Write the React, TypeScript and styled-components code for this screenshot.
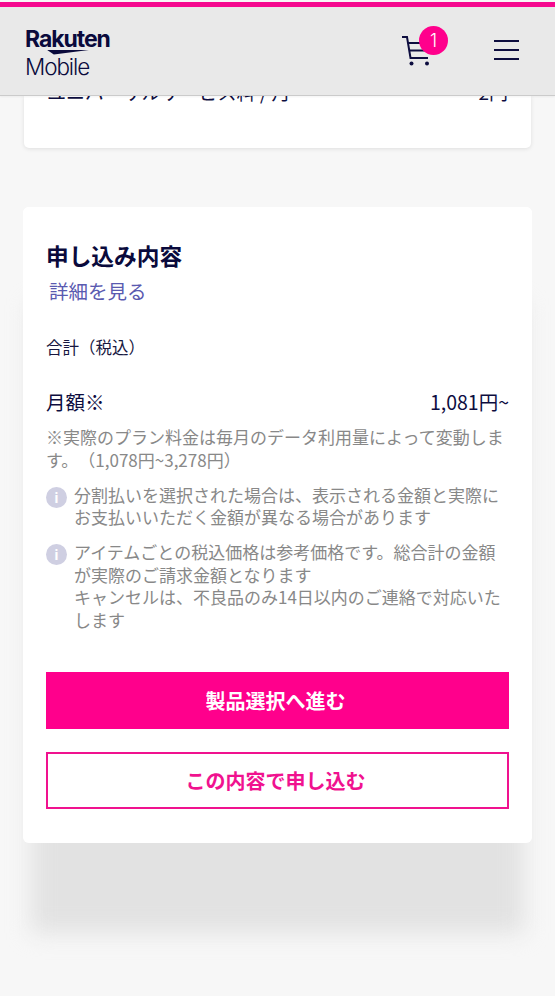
import React from "react";
import styled, { createGlobalStyle } from "styled-components";

const GlobalStyle = createGlobalStyle`
  html, body {
    margin: 0;
    padding: 0;
    background: #f7f7f7;
  }
  body {
    font-family: "Noto Sans CJK JP", "Noto Sans", sans-serif;
    text-spacing-trim: space-all;
  }
`;

const App: React.FC = () => {
  return (
    <Page>
      <GlobalStyle />
      <Header>
        <Logo>
          <LogoTop>Rakuten</LogoTop>
          <LogoSwoosh viewBox="0 0 50 6" aria-hidden="true">
            <path d="M0 0 L50 0 L8 5.5 Z" fill="#0a0a3c" />
          </LogoSwoosh>
          <LogoBottom>Mobile</LogoBottom>
        </Logo>
        <HeaderIcons>
          <CartWrap>
            <svg width="30" height="32" viewBox="0 0 30 32" fill="none" stroke="#0d0d3f" strokeWidth="2">
              <path d="M1 2 H6 L9.5 23 H27" />
              <path d="M7 8 H28" />
              <path d="M8.5 15.5 H26" />
              <circle cx="10.5" cy="28.5" r="2" fill="#0d0d3f" stroke="none" />
              <circle cx="26" cy="28.5" r="2" fill="#0d0d3f" stroke="none" />
            </svg>
            <Badge>1</Badge>
          </CartWrap>
          <Burger aria-label="menu">
            <BurgerLine />
            <BurgerLine />
            <BurgerLine />
          </Burger>
        </HeaderIcons>
      </Header>

      <Main>
        <PrevCard>
          <PrevRow>
            <span>ユニバーサルサービス料 / 月</span>
            <span>2円</span>
          </PrevRow>
        </PrevCard>

        <SummaryCard>
          <Title>申し込み内容</Title>
          <DetailLink>詳細を見る</DetailLink>
          <TotalLabel>合計（税込）</TotalLabel>
          <PriceRow>
            <span>月額※</span>
            <span>1,081円~</span>
          </PriceRow>
          <Note>※実際のプラン料金は毎月のデータ利用量によって変動します。（1,078円~3,278円）</Note>
          <InfoRow>
            <InfoIcon>i</InfoIcon>
            <Note>分割払いを選択された場合は、表示される金額と実際にお支払いいただく金額が異なる場合があります</Note>
          </InfoRow>
          <InfoRow>
            <InfoIcon>i</InfoIcon>
            <Note>
              アイテムごとの税込価格は参考価格です。総合計の金額が実際のご請求金額となります
              <br />
              キャンセルは、不良品のみ14日以内のご連絡で対応いたします
            </Note>
          </InfoRow>
          <Buttons>
            <PrimaryButton>製品選択へ進む</PrimaryButton>
            <OutlineButton>この内容で申し込む</OutlineButton>
          </Buttons>
        </SummaryCard>
      </Main>
    </Page>
  );
};

const Page = styled.div`
  width: 555px;
  height: 996px;
  overflow: hidden;
  background: #f7f7f7;
`;

const Header = styled.header`
  position: relative;
  z-index: 2;
  box-sizing: border-box;
  height: 94px;
  margin-top: 2px;
  padding: 0 36px 2px 25px;
  display: flex;
  align-items: center;
  justify-content: space-between;
  background: #e9e9e9;
  border-top: 5px solid #f5098f;
  border-bottom: 1px solid #cbcbcb;
  box-shadow: 0 1px 2px rgba(0, 0, 0, 0.05);
`;

const Logo = styled.div`
  display: flex;
  flex-direction: column;
  color: #0a0a3c;
  margin-top: 6px;
`;

const LogoTop = styled.div`
  font-family: "Inter", sans-serif;
  font-size: 23px;
  font-weight: 700;
  line-height: 22px;
  letter-spacing: -1.05px;
`;

const LogoSwoosh = styled.svg`
  width: 50px;
  height: 5px;
  margin: 0 0 0 18px;
`;

const LogoBottom = styled.div`
  font-family: "Inter", sans-serif;
  font-size: 22.5px;
  font-weight: 300;
  line-height: 23px;
  letter-spacing: -1.1px;
`;

const HeaderIcons = styled.div`
  display: flex;
  align-items: center;
  gap: 46px;
`;

const CartWrap = styled.div`
  position: relative;
  width: 47px;
  height: 32px;
  margin-top: 1px;
`;

const Badge = styled.div`
  position: absolute;
  left: 18px;
  top: -9px;
  width: 29px;
  height: 29px;
  border-radius: 50%;
  background: #ff008c;
  color: #fff;
  font-family: "Inter", sans-serif;
  font-size: 18px;
  font-weight: 300;
  line-height: 29px;
  text-align: center;
`;

const Burger = styled.div`
  width: 25px;
  display: flex;
  flex-direction: column;
  gap: 7px;
`;

const BurgerLine = styled.div`
  height: 2px;
  background: #0d0d3f;
`;

const Main = styled.main`
  padding: 0 23px;
  display: flex;
  flex-direction: column;
  gap: 59px;
`;

const PrevCard = styled.section`
  height: 52px;
  margin: 0 1px;
  background: #fff;
  border-radius: 0 0 5px 5px;
  box-shadow: 0 1px 4px rgba(0, 0, 0, 0.1);
`;

const PrevRow = styled.div`
  margin-top: -18px;
  padding: 0 23px;
  display: flex;
  justify-content: space-between;
  font-size: 19px;
  line-height: 28px;
  color: #0d0d3f;
`;

const SummaryCard = styled.section`
  position: relative;
  z-index: 0;
  padding: 32px 23px 34px;
  background: #fff;
  border-radius: 6px;

  &::before {
    content: "";
    position: absolute;
    z-index: -2;
    left: 8px;
    right: 8px;
    top: 98px;
    bottom: -90px;
    background: #e2e2e2;
    filter: blur(11px);
  }

  &::after {
    content: "";
    position: absolute;
    z-index: -1;
    inset: 0;
    background: #fff;
    border-radius: 6px;
  }
`;

const Title = styled.h2`
  margin: 0;
  font-size: 22.7px;
  font-weight: 700;
  line-height: 34px;
  color: #0a0a3c;
`;

const DetailLink = styled.a`
  display: block;
  margin: 4px 0 0 3px;
  font-size: 19.5px;
  line-height: 28px;
  color: #5a5ab0;
`;

const TotalLabel = styled.div`
  margin-top: 30px;
  font-size: 16.5px;
  line-height: 24px;
  color: #17173f;
`;

const PriceRow = styled.div`
  margin: 29px 0 10px;
  display: flex;
  justify-content: space-between;
  font-size: 19.5px;
  line-height: 28px;
  color: #0d0d3f;
`;

const Note = styled.p`
  margin: 0;
  flex: 1;
  font-size: 17px;
  line-height: 22.5px;
  color: #888888;
`;

const InfoRow = styled.div`
  margin-top: 12.5px;
  display: flex;
  gap: 7px;
`;

const InfoIcon = styled.span`
  flex: none;
  width: 21px;
  height: 21px;
  margin-top: 3px;
  border-radius: 50%;
  background: #cfcfe2;
  color: #fff;
  font-family: "Inter", sans-serif;
  font-size: 14px;
  font-weight: 700;
  line-height: 21px;
  text-align: center;
`;

const Buttons = styled.div`
  margin-top: 41px;
  display: flex;
  flex-direction: column;
  gap: 23px;
`;

const PrimaryButton = styled.button`
  height: 57px;
  padding: 0 4px 0 0;
  border: 0;
  background: #ff008c;
  color: #fff;
  font-family: inherit;
  font-size: 20px;
  font-weight: 700;
`;

const OutlineButton = styled.button`
  box-sizing: border-box;
  height: 57px;
  padding: 0 4px 0 0;
  border: 2px solid #f0128f;
  background: #fff;
  color: #f0128f;
  font-family: inherit;
  font-size: 20px;
  font-weight: 700;
`;

export default App;
